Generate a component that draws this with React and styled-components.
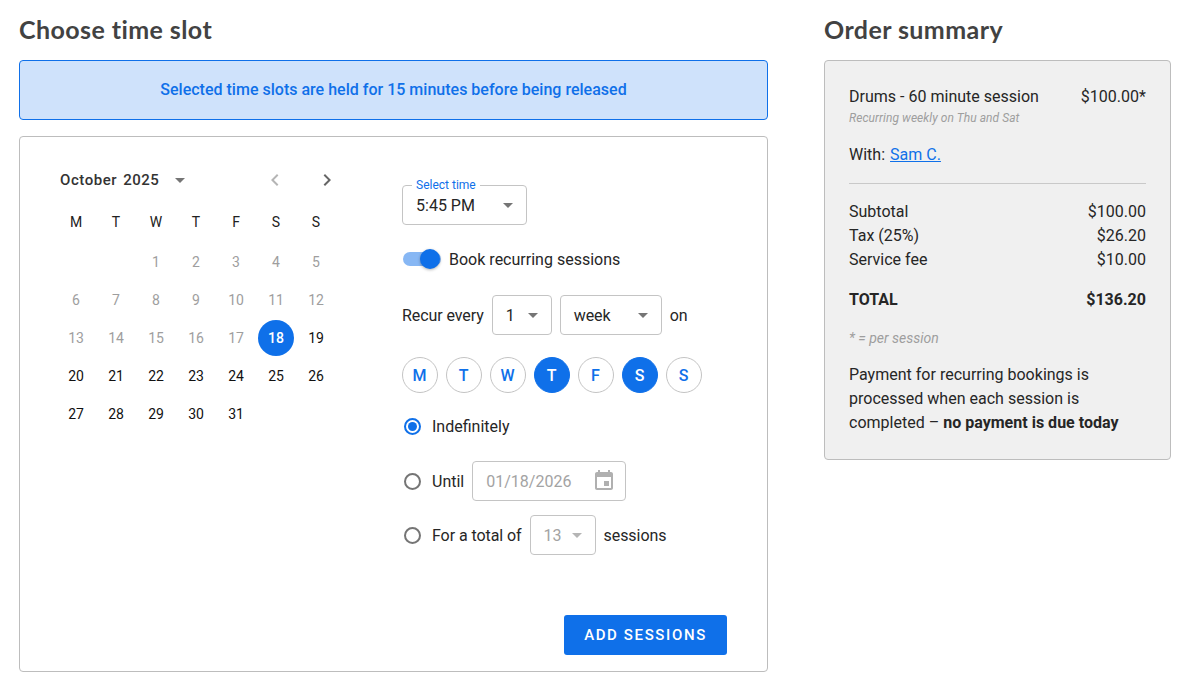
import React from "react";
import styled, { createGlobalStyle } from "styled-components";

const Global = createGlobalStyle`
  html, body { margin: 0; padding: 0; background: #fff; }
  body { font-family: Roboto, "Liberation Sans", sans-serif; color: #262626; font-size: 16px; letter-spacing: 0.01px; }
  * { box-sizing: border-box; }
`;

const Page = styled.div`
  display: flex;
  gap: 56px;
  padding: 0 24px 0 19px;
  width: 1195px;
  height: 688px;
  overflow: hidden;
`;
const LeftCol = styled.div`width: 749px;`;
const RightCol = styled.div`width: 347px;`;
const Heading = styled.h2`
  margin: 0;
  height: 60px;
  padding-top: 13px;
  font-family: Lato, "Open Sans", sans-serif;
  font-size: 25px;
  line-height: 32px;
  font-weight: 700;
  letter-spacing: 0.42px;
  color: #424242;
`;
const Alert = styled.div`
  height: 60px;
  display: flex;
  align-items: center;
  justify-content: center;
  padding-bottom: 1px;
  background: #cfe2fb;
  border: 1px solid #0f70e9;
  border-radius: 4px;
  color: #0f70e9;
  font-weight: 500;
  font-size: 16px;
`;
const Panel = styled.div`
  margin-top: 16px;
  height: 536px;
  display: flex;
  gap: 66px;
  padding: 23px 40px 16px 36px;
  border: 1px solid #bdbdbd;
  border-radius: 4px;
`;
const Calendar = styled.div`width: 280px; flex: none;`;
const MonthBar = styled.div`
  height: 40px;
  display: flex;
  align-items: center;
  padding-left: 4px;
  font-weight: 500;
  font-size: 15px;
  letter-spacing: 0.55px;
  color: #333;
`;
const MonthName = styled.span`margin-right: 6px;`;
const MonthCaret = styled.span`display: flex; margin-left: 9px; color: #757575;`;
const NavButton = styled.span`
  display: flex;
  color: ${p => (p.$off ? "#b5b5b5" : "#666")};
  margin-left: ${p => p.$gap}px;
`;
const Week = styled.div`
  display: grid;
  grid-template-columns: repeat(7, 40px);
  height: ${p => p.$h || 38}px;
  align-items: center;
  justify-items: center;
`;
const WeekHead = styled(Week)`
  margin-top: 2px;
  height: 40px;
  margin-bottom: 1px;
`;
const Dow = styled.span`font-size: 14px; letter-spacing: 0; color: #212121;`;
const Day = styled.span`
  width: 36px;
  height: 36px;
  display: flex;
  align-items: center;
  justify-content: center;
  border-radius: 50%;
  font-size: 14px;
  letter-spacing: 0;
  font-weight: ${p => (p.$sel ? 500 : 400)};
  color: ${p => (p.$sel ? "#fff" : p.$off ? "#9e9e9e" : "#111")};
  background: ${p => (p.$sel ? "#0f70e9" : "transparent")};
`;
const Form = styled.div`width: 325px; display: flex; flex-direction: column; position: relative;`;
const Box = styled.div`
  height: 40px;
  width: ${p => p.$w}px;
  flex: none;
  margin-top: ${p => p.$mt || 0}px;
  display: flex;
  align-items: center;
  justify-content: space-between;
  padding: ${p => p.$pad || "0 12px 0 13px"};
  border: 1px solid #c4c4c4;
  border-radius: 4px;
  color: ${p => (p.$off ? "#a3a3a3" : "#262626")};
  position: relative;
`;
const Floating = styled.span`
  position: absolute;
  top: -8px;
  left: 9px;
  padding: 0 4px;
  background: #fff;
  font-size: 12px;
  line-height: 14px;
  letter-spacing: 0;
  color: #0f70e9;
`;
const SwitchRow = styled.div`
  margin-top: 18px;
  height: 32px;
  display: flex;
  align-items: center;
  gap: 8px;
`;
const Track = styled.span`
  width: 38px;
  height: 14px;
  margin-left: 1px;
  border-radius: 7px;
  background: #87b7f4;
  position: relative;
  display: block;
`;
const Thumb = styled.span`
  position: absolute;
  right: 1px;
  top: -3px;
  width: 20px;
  height: 20px;
  border-radius: 50%;
  background: #0f70e9;
  box-shadow: 0 1px 3px rgba(0,0,0,.3);
`;
const RecurRow = styled.div`
  margin-top: 20px;
  display: flex;
  align-items: center;
  gap: 8px;
  letter-spacing: -0.08px;
`;
const DayRow = styled.div`
  margin-top: 22px;
  display: flex;
  gap: 8px;
`;
const DayButton = styled.span`
  width: 36px;
  height: 36px;
  border-radius: 50%;
  display: flex;
  align-items: center;
  justify-content: center;
  font-weight: 500;
  font-size: 16px;
  letter-spacing: 0;
  padding-right: 1px;
  color: ${p => (p.$on ? "#fff" : "#0f70e9")};
  background: ${p => (p.$on ? "#0f70e9" : "#fff")};
  border: 1px solid ${p => (p.$on ? "#0f70e9" : "#c4c4c4")};
`;
const RadioRow = styled.div`
  margin-top: ${p => p.$mt}px;
  min-height: ${p => p.$h}px;
  display: flex;
  align-items: center;
  gap: 8px;
  letter-spacing: ${p => p.$ls || 0}px;
`;
const RadioMark = styled.span`
  width: 17px;
  height: 17px;
  margin-left: 2px;
  margin-right: 3px;
  border-radius: 50%;
  border: 2px solid ${p => (p.$on ? "#0f70e9" : "#757575")};
  display: flex;
  align-items: center;
  justify-content: center;
  &::after {
    content: "";
    display: ${p => (p.$on ? "block" : "none")};
    width: 9px;
    height: 9px;
    border-radius: 50%;
    background: #0f70e9;
  }
`;
const Actions = styled.div`
  position: absolute;
  right: 0;
  bottom: 0;
`;
const AddButton = styled.button`
  width: 163px;
  height: 40px;
  border: 0;
  border-radius: 3px;
  background: #0f70e9;
  color: #fff;
  font-family: Roboto, sans-serif;
  font-weight: 500;
  font-size: 15px;
  letter-spacing: 1.62px;
`;
const Summary = styled.div`
  height: 400px;
  padding: 24px;
  background: #f0f0f0;
  border: 1px solid #bdbdbd;
  border-radius: 4px;
  line-height: 24px;
`;
const Line = styled.div`
  display: flex;
  justify-content: space-between;
  margin-top: ${p => p.$mt || 0}px;
  font-weight: ${p => (p.$bold ? 700 : 400)};
`;
const Note = styled.div`
  font-style: italic;
  color: #9e9e9e;
  font-size: ${p => p.$size}px;
  line-height: 18px;
  margin-top: ${p => p.$mt || 0}px;
  letter-spacing: ${p => p.$ls || 0}px;
`;
const StaffLink = styled.a`color: #0f70e9; text-decoration: underline; margin-left: 1px;`;
const Rule = styled.hr`
  margin: 16px 0;
  border: 0;
  border-top: 1px solid #c9c9c9;
  height: 0;
`;
const Para = styled.p`margin: 16px 0 0;`;

const Caret = ({ size = 24 }) => (
  <svg width={size} height={size} viewBox="0 0 24 24" fill="currentColor"><path d="M7 10l5 5 5-5z" /></svg>
);
const SelectCaret = styled.span`display: flex; color: ${p => (p.$off ? "#b5b5b5" : "#757575")}; margin-right: ${p => p.$mr || 0}px;`;

const weeks = [
  [null, null, 1, 2, 3, 4, 5],
  [6, 7, 8, 9, 10, 11, 12],
  [13, 14, 15, 16, 17, 18, 19],
  [20, 21, 22, 23, 24, 25, 26],
  [27, 28, 29, 30, 31, null, null],
];

export default function App() {
  return (
    <Page>
      <Global />
      <LeftCol>
        <Heading>Choose time slot</Heading>
        <Alert>Selected time slots are held for 15 minutes before being released</Alert>
        <Panel>
          <Calendar>
            <MonthBar>
              <MonthName>October</MonthName>2025
              <MonthCaret><Caret /></MonthCaret>
              <NavButton $off $gap={71}>
                <svg width="24" height="24" viewBox="0 0 24 24" fill="currentColor"><path d="M15.41 7.41 14 6l-6 6 6 6 1.41-1.41L10.83 12z" /></svg>
              </NavButton>
              <NavButton $gap={28}>
                <svg width="24" height="24" viewBox="0 0 24 24" fill="currentColor"><path d="M10 6 8.59 7.41 13.17 12l-4.58 4.59L10 18l6-6z" /></svg>
              </NavButton>
            </MonthBar>
            <WeekHead>
              {["M", "T", "W", "T", "F", "S", "S"].map((d, i) => <Dow key={i}>{d}</Dow>)}
            </WeekHead>
            {weeks.map((w, i) => (
              <Week key={i}>
                {w.map((d, j) => d === null
                  ? <span key={j} />
                  : <Day key={j} $sel={d === 18} $off={d < 18}>{d}</Day>)}
              </Week>
            ))}
          </Calendar>
          <Form>
            <Box $w={125} $mt={25} $pad="0 6px 0 13px">
              <Floating>Select time</Floating>
              5:45 PM
              <SelectCaret><Caret /></SelectCaret>
            </Box>
            <SwitchRow>
              <Track><Thumb /></Track>
              Book recurring sessions
            </SwitchRow>
            <RecurRow>
              Recur every
              <Box $w={60} $pad="0 6px 0 13px">1<SelectCaret><Caret /></SelectCaret></Box>
              <Box $w={102} $pad="0 6px 0 13px">week<SelectCaret><Caret /></SelectCaret></Box>
              on
            </RecurRow>
            <DayRow>
              <DayButton>M</DayButton>
              <DayButton>T</DayButton>
              <DayButton>W</DayButton>
              <DayButton $on>T</DayButton>
              <DayButton>F</DayButton>
              <DayButton $on>S</DayButton>
              <DayButton>S</DayButton>
            </DayRow>
            <RadioRow $mt={21} $h={24}>
              <RadioMark $on />
              Indefinitely
            </RadioRow>
            <RadioRow $mt={23} $h={40}>
              <RadioMark />
              Until
              <Box $off $w={154} $pad="0 9px 0 13px">
                01/18/2026
                <svg width="24" height="24" viewBox="0 0 24 24" fill="#b0b0b0"><path d="M17 12h-5v5h5v-5zM16 1v2H8V1H6v2H5c-1.11 0-1.99.9-1.99 2L3 19c0 1.1.89 2 2 2h14c1.1 0 2-.9 2-2V5c0-1.1-.9-2-2-2h-1V1h-2zm3 18H5V8h14v11z" /></svg>
              </Box>
            </RadioRow>
            <RadioRow $mt={14} $h={40} $ls={-0.07}>
              <RadioMark />
              For a total of
              <Box $off $w={66} $pad="0 6px 0 13px">13<SelectCaret $off><Caret /></SelectCaret></Box>
              sessions
            </RadioRow>
            <Actions><AddButton>ADD SESSIONS</AddButton></Actions>
          </Form>
        </Panel>
      </LeftCol>
      <RightCol>
        <Heading>Order summary</Heading>
        <Summary>
          <Line><span>Drums - 60 minute session</span><span>$100.00*</span></Line>
          <Note $size={12} $ls={0.06}>Recurring weekly on Thu and Sat</Note>
          <Line $mt={16}><span>With: <StaffLink href="#">Sam C.</StaffLink></span></Line>
          <Rule />
          <Line><span>Subtotal</span><span>$100.00</span></Line>
          <Line><span>Tax (25%)</span><span>$26.20</span></Line>
          <Line><span>Service fee</span><span>$10.00</span></Line>
          <Line $mt={16} $bold><span>TOTAL</span><span>$136.20</span></Line>
          <Note $size={14} $mt={17}>* = per session</Note>
          <Para>Payment for recurring bookings is processed when each session is completed – <b>no payment is due today</b></Para>
        </Summary>
      </RightCol>
    </Page>
  );
}
